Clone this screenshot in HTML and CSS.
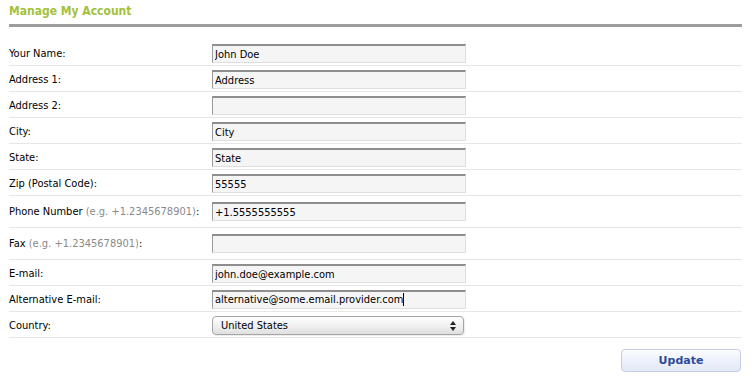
FILE: index.html
```html
<!DOCTYPE html>
<html>
<head>
<meta charset="utf-8">
<link rel="stylesheet" href="styles.css">
</head>
<body>
<div class="page">
  <h1 class="title">Manage My Account</h1>
  <form class="form">
    <div class="row"><label class="lbl">Your Name:</label><div class="field"><input class="inp" type="text" value="John Doe"></div></div>
    <div class="row"><label class="lbl">Address 1:</label><div class="field"><input class="inp" type="text" value="Address"></div></div>
    <div class="row"><label class="lbl">Address 2:</label><div class="field"><input class="inp" type="text" value=""></div></div>
    <div class="row"><label class="lbl">City:</label><div class="field"><input class="inp" type="text" value="City"></div></div>
    <div class="row"><label class="lbl">State:</label><div class="field"><input class="inp" type="text" value="State"></div></div>
    <div class="row"><label class="lbl">Zip (Postal Code):</label><div class="field"><input class="inp" type="text" value="55555"></div></div>
    <div class="row tall"><label class="lbl">Phone Number <span class="hint">(e.g. +1.2345678901)</span>:</label><div class="field"><input class="inp" type="text" value="+1.5555555555"></div></div>
    <div class="row tall"><label class="lbl">Fax <span class="hint">(e.g. +1.2345678901)</span>:</label><div class="field"><input class="inp" type="text" value=""></div></div>
    <div class="row"><label class="lbl">E-mail:</label><div class="field"><input class="inp" type="text" value="john.doe@example.com"></div></div>
    <div class="row"><label class="lbl">Alternative E-mail:</label><div class="field"><div class="inp fake">alternative@some.email.provider.com<span class="caret"></span></div></div></div>
    <div class="row"><label class="lbl">Country:</label><div class="field"><div class="sel"><span>United States</span><svg class="arrows" width="6" height="10" viewBox="0 0 6 10"><path d="M3 0 L6 4 L0 4 Z M0 6 L6 6 L3 10 Z" fill="#222"/></svg></div></div></div>
    <div class="actions"><button class="btn" type="button">Update</button></div>
  </form>
</div>
</body>
</html>
```
FILE: styles.css
```css
html, body { margin: 0; padding: 0; background: #fff; }
body { font-family: "DejaVu Sans Condensed", "DejaVu Sans", sans-serif; font-size: 11px; color: #000; }
.page { width: 733px; padding: 0 0 0 9px; }
.title {
  margin: 0;
  padding: 3px 0 5px 0;
  font-size: 12px;
  line-height: 16px;
  font-weight: bold;
  color: #a3c13a;
  border-bottom: 3px solid #9c9c9c;
}
.form { margin: 13px 0 0 0; }
.row {
  display: flex;
  align-items: center;
  padding: 4px 0 2px 0;
  border-bottom: 1px solid #e6e6e6;
}
.row.tall { padding: 6px 0 6px 0; }
.lbl { width: 203px; flex: none; line-height: 14px; }
.hint { color: #8a8a8a; }
.field { flex: none; }
.inp {
  box-sizing: border-box;
  width: 254px;
  height: 19px;
  margin: 0;
  padding: 1px 2px;
  font-family: inherit;
  font-size: 11px;
  color: #000;
  background: #f5f5f5;
  border: 1px solid #dedede;
  border-top: 2px solid #8e8e8e;
  border-left: 1px solid #9a9a9a;
  outline: none;
  border-radius: 0;
}
.fake { display: flex; align-items: center; line-height: 14px; padding-top: 0; }
.caret { display: inline-block; width: 1px; height: 13px; background: #000; margin-left: 0; }
.sel {
  box-sizing: border-box;
  width: 252px;
  height: 19px;
  display: flex;
  align-items: center;
  justify-content: space-between;
  padding: 0 7px 0 8px;
  border: 1px solid #a5a5a5;
  border-radius: 4px;
  background: linear-gradient(#ffffff, #f0f0f0 50%, #e0e0e0);
  box-shadow: 1px 1px 1px rgba(0,0,0,0.08);
  font-size: 11px;
}
.arrows { display: block; }
.actions { display: flex; justify-content: flex-end; padding: 11px 1px 0 0; }
.btn {
  width: 120px;
  height: 23px;
  border: 1px solid #c3cde6;
  border-radius: 4px;
  background: linear-gradient(#fbfcff, #eef1fb 50%, #e3e8f7);
  font-family: "DejaVu Sans", sans-serif;
  font-weight: bold;
  font-size: 11px;
  color: #2e4b9a;
  padding: 0;
}
```
